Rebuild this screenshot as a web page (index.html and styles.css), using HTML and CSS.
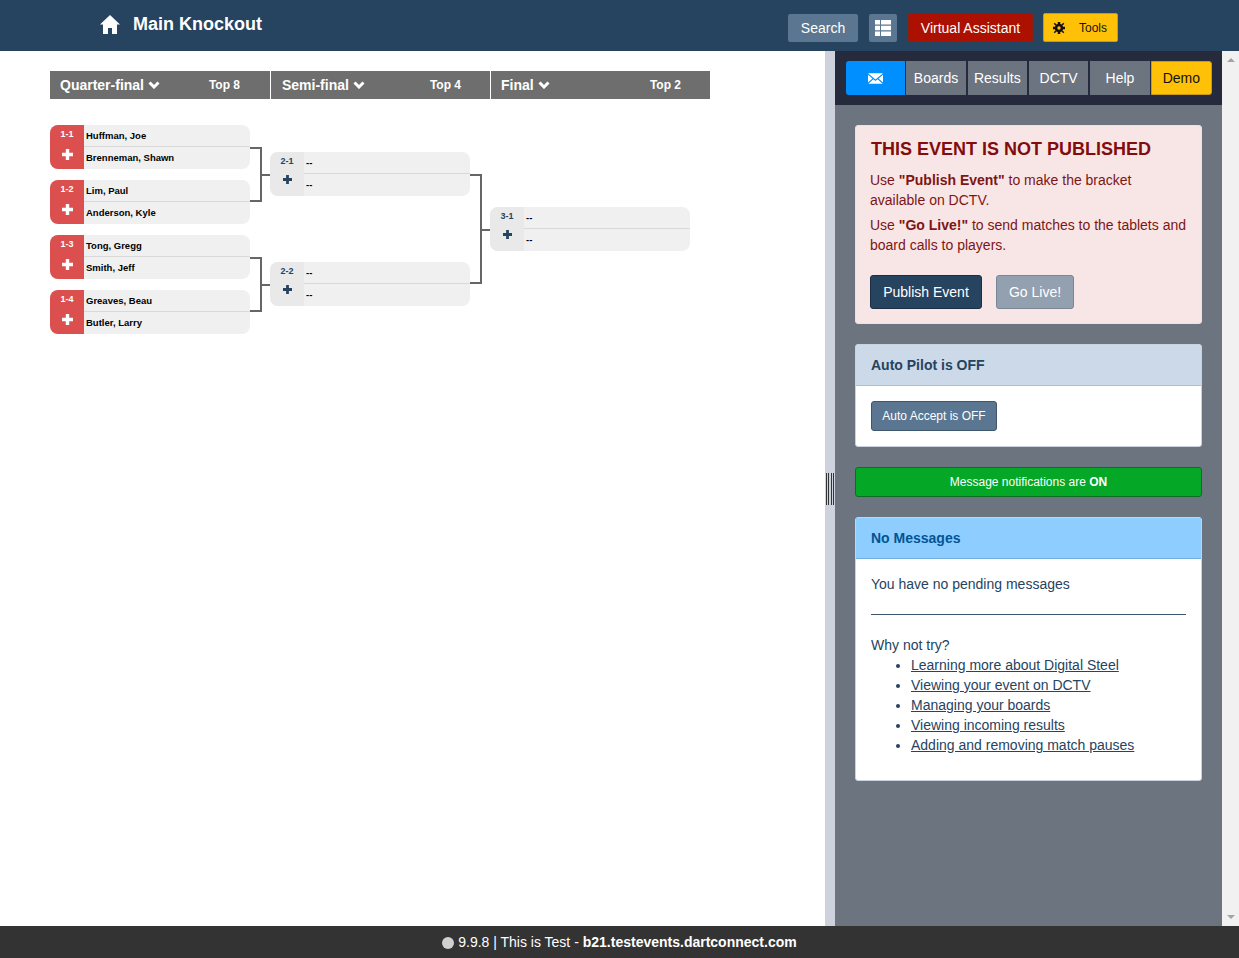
FILE: index.html
```html
<!DOCTYPE html>
<html lang="en">
<head>
<meta charset="utf-8">
<title>Main Knockout</title>
<link rel="stylesheet" href="styles.css">
</head>
<body>
<header class="topbar">
  <div class="title">
    <svg class="home" viewBox="0 0 20 19" width="20" height="19"><path fill="#fff" d="M10 0 L20 9.500 L17 9.500 L17 19 L12 19 L12 13 L8 13 L8 19 L3 19 L3 9.500 L0 9.500 Z"/></svg>
    <span>Main Knockout</span>
  </div>
  <div class="top-actions">
    <a class="tbtn slate search">Search</a>
    <a class="tbtn slate list" aria-label="List">
      <svg viewBox="0 0 16 16" width="16" height="16"><path fill="#fff" d="M0 0h5v4.600H0zM6 0h10v4.600H6zM0 5.700h5v4.600H0zM6 5.700h10v4.600H6zM0 11.400h5V16H0zM6 11.400h10V16H6z"/></svg>
    </a>
    <a class="tbtn red">Virtual Assistant</a>
    <a class="tbtn amber tools">
      <svg viewBox="0 0 24 24" width="12" height="12"><g fill="#111"><path fill-rule="evenodd" d="M12 3.500a8.500 8.500 0 1 0 0 17 8.500 8.500 0 0 0 0-17zM12 8.600a3.400 3.400 0 1 1 0 6.800 3.400 3.400 0 0 1 0-6.800z"/><path d="M9.500 0h5v5h-5zM9.500 19h5v5h-5zM0 9.500h5v5H0zM19 9.500h5v5h-5zM3.500 1.400l4 4-2.100 2.100-4-4zM20.500 1.400l2.100 2.100-4 4-2.100-2.100zM1.400 20.500l4-4 2.100 2.100-4 4zM18.600 16.500l4 4-2.100 2.100-4-4z"/></g></svg>
      <span>Tools</span>
    </a>
  </div>
</header>

<main class="workspace">
  <section class="bracket-pane">
    <div class="rounds">
      <div class="round-head">
        <span class="round-name">Quarter-final <svg class="chev" viewBox="0 0 12 8" width="12" height="8"><path d="M1.500 1.500 6 6l4.500-4.500" fill="none" stroke="#fff" stroke-width="3"/></svg></span>
        <span class="round-top">Top 8</span>
      </div>
      <div class="round-head">
        <span class="round-name">Semi-final <svg class="chev" viewBox="0 0 12 8" width="12" height="8"><path d="M1.500 1.500 6 6l4.500-4.500" fill="none" stroke="#fff" stroke-width="3"/></svg></span>
        <span class="round-top">Top 4</span>
      </div>
      <div class="round-head">
        <span class="round-name">Final <svg class="chev" viewBox="0 0 12 8" width="12" height="8"><path d="M1.500 1.500 6 6l4.500-4.500" fill="none" stroke="#fff" stroke-width="3"/></svg></span>
        <span class="round-top">Top 2</span>
      </div>
    </div>

    <div class="bracket">
      <div class="col col-1">
        <div class="pair">
          <div class="match hot">
            <div class="side"><span class="mid">1-1</span><svg class="plus" viewBox="0 0 11 11"><path d="M3.800 0h3.400v3.800H11v3.400H7.200V11H3.800V7.200H0V3.800h3.800z"/></svg></div>
            <div class="names"><div class="nm">Huffman, Joe</div><div class="nm">Brenneman, Shawn</div></div>
          </div>
          <div class="match hot">
            <div class="side"><span class="mid">1-2</span><svg class="plus" viewBox="0 0 11 11"><path d="M3.800 0h3.400v3.800H11v3.400H7.200V11H3.800V7.200H0V3.800h3.800z"/></svg></div>
            <div class="names"><div class="nm">Lim, Paul</div><div class="nm">Anderson, Kyle</div></div>
          </div>
          <i class="link"></i>
        </div>
        <div class="pair">
          <div class="match hot">
            <div class="side"><span class="mid">1-3</span><svg class="plus" viewBox="0 0 11 11"><path d="M3.800 0h3.400v3.800H11v3.400H7.200V11H3.800V7.200H0V3.800h3.800z"/></svg></div>
            <div class="names"><div class="nm">Tong, Gregg</div><div class="nm">Smith, Jeff</div></div>
          </div>
          <div class="match hot">
            <div class="side"><span class="mid">1-4</span><svg class="plus" viewBox="0 0 11 11"><path d="M3.800 0h3.400v3.800H11v3.400H7.200V11H3.800V7.200H0V3.800h3.800z"/></svg></div>
            <div class="names"><div class="nm">Greaves, Beau</div><div class="nm">Butler, Larry</div></div>
          </div>
          <i class="link"></i>
        </div>
      </div>
      <div class="col col-2">
        <div class="match">
          <div class="side"><span class="mid">2-1</span><svg class="plus" viewBox="0 0 11 11"><path d="M3.800 0h3.400v3.800H11v3.400H7.200V11H3.800V7.200H0V3.800h3.800z"/></svg></div>
          <div class="names"><div class="nm">--</div><div class="nm">--</div></div>
        </div>
        <div class="match">
          <div class="side"><span class="mid">2-2</span><svg class="plus" viewBox="0 0 11 11"><path d="M3.800 0h3.400v3.800H11v3.400H7.200V11H3.800V7.200H0V3.800h3.800z"/></svg></div>
          <div class="names"><div class="nm">--</div><div class="nm">--</div></div>
        </div>
        <i class="link link-wide"></i>
      </div>
      <div class="col col-3">
        <div class="match">
          <div class="side"><span class="mid">3-1</span><svg class="plus" viewBox="0 0 11 11"><path d="M3.800 0h3.400v3.800H11v3.400H7.200V11H3.800V7.200H0V3.800h3.800z"/></svg></div>
          <div class="names"><div class="nm">--</div><div class="nm">--</div></div>
        </div>
      </div>
    </div>
  </section>

  <div class="splitter"><span class="grip"></span></div>

  <aside class="side-panel">
    <nav class="tabs">
      <a class="tab mail" aria-label="Messages">
        <svg viewBox="0 0 16 11" width="15" height="11"><path fill="#fff" d="M0 0h16L8 6.500zM0 1.600v8.200l4.800-4.300zM16 1.600v8.200l-4.800-4.300zM5.700 6.300 8 8.200l2.300-1.900L15.600 11H.4z"/></svg>
      </a>
      <a class="tab">Boards</a>
      <a class="tab">Results</a>
      <a class="tab">DCTV</a>
      <a class="tab">Help</a>
      <a class="tab demo">Demo</a>
    </nav>
    <div class="panel-body">
      <section class="card alert">
        <h2>THIS EVENT IS NOT PUBLISHED</h2>
        <p>Use <b>"Publish Event"</b> to make the bracket available on DCTV.</p>
        <p>Use <b>"Go Live!"</b> to send matches to the tablets and board calls to players.</p>
        <div class="alert-actions">
          <a class="btn navy">Publish Event</a>
          <a class="btn muted">Go Live!</a>
        </div>
      </section>

      <section class="card plain">
        <h3 class="card-head pale">Auto Pilot is OFF</h3>
        <div class="card-body short">
          <a class="btn small">Auto Accept is OFF</a>
        </div>
      </section>

      <div class="notify">Message notifications are <b>ON</b></div>

      <section class="card plain">
        <h3 class="card-head sky">No Messages</h3>
        <div class="card-body msgs">
          <p class="none">You have no pending messages</p>
          <hr>
          <p class="why">Why not try?</p>
          <ul>
            <li><a>Learning more about Digital Steel</a></li>
            <li><a>Viewing your event on DCTV</a></li>
            <li><a>Managing your boards</a></li>
            <li><a>Viewing incoming results</a></li>
            <li><a>Adding and removing match pauses</a></li>
          </ul>
        </div>
      </section>
    </div>
  </aside>

  <div class="scrollbar"><span class="arrow up"></span><span class="arrow down"></span></div>
</main>

<footer class="footer"><span class="dot"></span> 9.9.8 | This is Test - <b>b21.testevents.dartconnect.com</b></footer>
</body>
</html>
```
FILE: styles.css
```css
* { box-sizing: border-box; }
html, body { height: 100%; }
body {
  margin: 0;
  display: flex;
  flex-direction: column;
  height: 958px;
  overflow: hidden;
  font-family: "Liberation Sans", Arial, sans-serif;
  font-size: 14px;
  color: #26435f;
  background: #fff;
}

/* top bar */
.topbar {
  flex: 0 0 51px;
  display: flex;
  align-items: flex-start;
  justify-content: space-between;
  background: #26435f;
  padding: 0 121px 0 100px;
}
.title {
  display: flex;
  align-items: center;
  gap: 13px;
  height: 48px;
  color: #fff;
  font-size: 18px;
  font-weight: bold;
}
.home { margin-top: 1px; }
.top-actions {
  display: flex;
  align-items: center;
  padding-top: 13px;
}
.tbtn {
  display: flex;
  align-items: center;
  justify-content: center;
  height: 29px;
  border-radius: 2px;
  color: #fff;
  font-size: 14px;
}
.slate { background: #5a7690; height: 28px; }
.search { width: 70px; margin-right: 11px; }
.list { width: 28px; margin-right: 11px; }
.red {
  width: 125px;
  margin-right: 10px;
  background: #ab1000;
  border: 1px solid #8a2010;
}
.amber {
  background: #ffc107;
  border: 1px solid #c79a1a;
  color: #111;
}
.tools {
  width: 75px;
  font-size: 12px;
  gap: 14px;
  padding-right: 1px;
}

/* workspace */
.workspace {
  flex: 1 1 auto;
  display: flex;
  min-height: 0;
}
.bracket-pane {
  flex: 0 0 825px;
  padding: 20px 0 0 50px;
  background: #fff;
}
.rounds { display: flex; width: 660px; }
.round-head {
  flex: 0 0 220px;
  height: 28px;
  display: flex;
  align-items: center;
  justify-content: space-between;
  padding: 0 29px 0 10px;
  background: #6e6e6e;
  color: #fff;
  font-weight: bold;
  border-left: 1px solid #fff;
}
.round-head:first-child { border-left: 0; padding-right: 30px; }
.round-head:nth-child(2) { padding-left: 11px; }
.round-name { display: flex; align-items: center; white-space: pre; }
.round-top { font-size: 12px; }

.bracket {
  display: flex;
  gap: 20px;
  padding-top: 26px;
}
.col { position: relative; width: 200px; flex: none; }
.pair { position: relative; margin-bottom: 11px; }
.col-2 { padding-top: 27px; }
.col-2 .match + .match { margin-top: 66px; }
.col-3 { padding-top: 82px; }

.match {
  display: flex;
  width: 200px;
  height: 44px;
  border-radius: 8px;
  overflow: hidden;
  background: #f1f0f0;
}
.pair .match + .match { margin-top: 11px; }
.side {
  flex: 0 0 34px;
  display: flex;
  flex-direction: column;
  align-items: center;
  background: #e9e9e9;
  color: #26435f;
}
.hot .side { background: #dc4f4f; color: #fff; }
.mid {
  margin-top: 3px;
  height: 13px;
  line-height: 13px;
  font-size: 9px;
  font-weight: bold;
}
.plus {
  width: 9px;
  height: 9px;
  margin-top: 7px;
  fill: currentColor;
}
.hot .plus {
  width: 11px;
  height: 11px;
  margin-top: 8px;
}
.names { flex: 1; min-width: 0; }
.nm {
  height: 22px;
  padding: 1px 0 0 2px;
  font-size: 9.500px;
  line-height: 20px;
  font-weight: bold;
  color: #000;
}
.nm:first-child { height: 22px; border-bottom: 1px solid #d9d9d9; }

/* connectors sit over the gutter between rounds */
.link {
  position: absolute;
  left: 200px;
  top: 22px;
  width: 12px;
  height: 55px;
  border: 2px solid #666;
  border-left: 0;
}
.link::after {
  content: "";
  position: absolute;
  left: 10px;
  top: 24.500px;
  width: 10px;
  height: 2px;
  background: #666;
}
.link-wide { top: 49px; height: 110px; }
.link-wide::after { top: 53px; }

/* splitter + right panel */
.splitter {
  flex: 0 0 10px;
  display: flex;
  align-items: center;
  background: #cdd2dc;
}
.grip {
  width: 8px;
  height: 32px;
  margin: 0 0 0 1px;
  background: repeating-linear-gradient(90deg, #333 0 1px, transparent 1px 2.330px);
}
.side-panel {
  flex: 0 0 387px;
  display: flex;
  flex-direction: column;
  background: #6c7480;
}
.tabs {
  flex: 0 0 54px;
  display: flex;
  gap: 2px;
  padding: 10px 10px 10px 11px;
  background: #252a3c;
}
.tab {
  flex: 1 1 0;
  display: flex;
  align-items: center;
  justify-content: center;
  height: 34px;
  background: #6c7480;
  color: #fff;
  font-size: 14px;
}
.mail {
  margin-right: -1px;
  background: #008fff;
  border-radius: 3px 0 0 3px;
}
.demo {
  margin-left: -1px;
  background: #ffc107;
  border: 1px solid #c79a1a;
  border-radius: 0 3px 3px 0;
  color: #111;
}
.panel-body {
  display: flex;
  flex-direction: column;
  gap: 20px;
  padding: 20px 20px 0;
}
.card { border-radius: 3px; }
.alert {
  height: 199px;
  padding: 13px 13px 13px 14px;
  background: #f8e6e6;
  color: #7d1515;
  border: 1px solid #f1dede;
}
.alert h2 {
  margin: 0 0 11px 1px;
  font-size: 18px;
  line-height: 20px;
  font-weight: bold;
  color: #830c0c;
}
.alert p { margin: 0 0 5px; line-height: 20px; }
.alert-actions { display: flex; gap: 14px; margin-top: 20px; }
.btn {
  display: flex;
  align-items: center;
  justify-content: center;
  height: 34px;
  border-radius: 3px;
  color: #fff;
}
.navy { width: 112px; background: #26435f; border: 1px solid #1a2f44; }
.muted { width: 78px; background: #93a0b0; border: 1px solid #7a8695; }
.plain { background: #fff; border: 1px solid #c9d3df; }
.card-head {
  margin: 0;
  height: 41px;
  padding: 0 15px;
  line-height: 40px;
  font-size: 14px;
  font-weight: bold;
  border-bottom: 1px solid #aebfd0;
}
.pale { background: #cbd9e8; color: #26435f; }
.sky { background: #8ecdff; color: #035493; border-bottom-color: #74aedc; }
.card-body { padding: 15px; }
.short { height: 60px; }
.small {
  width: 126px;
  height: 30px;
  background: #5a7690;
  border: 1px solid #3f566d;
  font-size: 12px;
}
.notify {
  height: 30px;
  background: #04a826;
  border: 1px solid #0a6f22;
  border-radius: 3px;
  color: #fff;
  font-size: 12px;
  line-height: 28px;
  text-align: center;
}
.msgs { height: 221px; padding-top: 15px; }
.none { margin: 0; line-height: 20px; }
.msgs hr {
  margin: 20px 0;
  border: 0;
  border-top: 1px solid #3d566e;
}
.why { margin: 0; line-height: 20px; }
.msgs ul { margin: 0; padding-left: 40px; }
.msgs li { line-height: 20px; }
.msgs a { color: #26435f; text-decoration: underline; }

.scrollbar {
  flex: 0 0 17px;
  display: flex;
  flex-direction: column;
  justify-content: space-between;
  align-items: center;
  padding: 7px 0;
  background: #f1f1f1;
}
.arrow { width: 0; height: 0; border-left: 4px solid transparent; border-right: 4px solid transparent; }
.up { border-bottom: 4px solid #a3a3a3; }
.down { border-top: 4px solid #a3a3a3; }

.footer {
  flex: 0 0 32px;
  background: #333;
  color: #fff;
  text-align: center;
  line-height: 32px;
  font-size: 14px;
}
.dot {
  display: inline-block;
  width: 12px;
  height: 12px;
  border-radius: 50%;
  background: #d0d0d0;
  vertical-align: -2px;
}
```
